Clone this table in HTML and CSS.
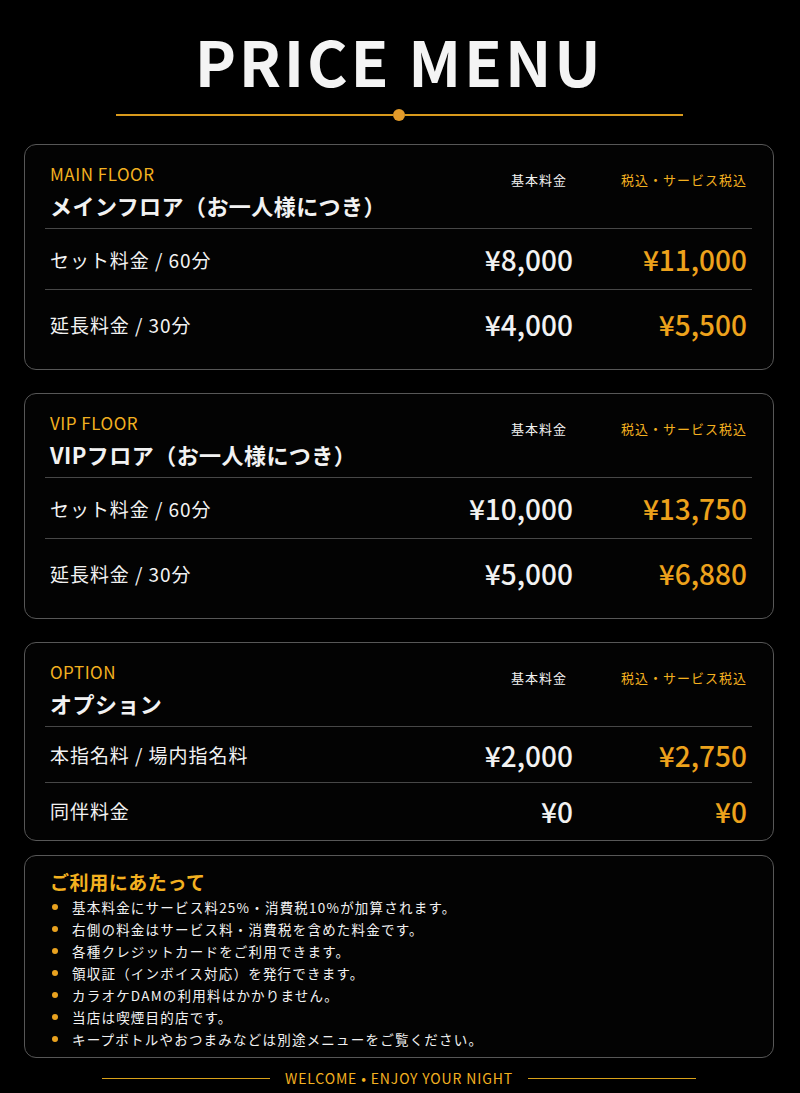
FILE: index.html
```html
<!DOCTYPE html>
<html lang="ja">
<head>
    <meta charset="UTF-8">
    <meta name="viewport" content="width=device-width, initial-scale=1.0">
    <title>PRICE MENU</title>
    <link rel="stylesheet" href="styles.css">
</head>
<body>
<div id="page">
    <header class="head">
        <h1 class="title">PRICE MENU</h1>
        <div class="ornament"><span class="line"></span><span class="dot"></span><span class="line"></span></div>
    </header>

    <section class="card">
        <div class="card-head">
            <div class="card-name">
                <div class="en">MAIN FLOOR</div>
                <h2 class="ja">メインフロア（お一人様につき）</h2>
            </div>
            <div class="col-label base">基本料金</div>
            <div class="col-label gold">税込・サービス税込</div>
        </div>
        <div class="row">
            <div class="item">セット料金 / 60分</div>
            <div class="price">¥8,000</div>
            <div class="price gold">¥11,000</div>
        </div>
        <div class="row">
            <div class="item">延長料金 / 30分</div>
            <div class="price">¥4,000</div>
            <div class="price gold">¥5,500</div>
        </div>
    </section>

    <section class="card">
        <div class="card-head">
            <div class="card-name">
                <div class="en">VIP FLOOR</div>
                <h2 class="ja">VIPフロア（お一人様につき）</h2>
            </div>
            <div class="col-label base">基本料金</div>
            <div class="col-label gold">税込・サービス税込</div>
        </div>
        <div class="row">
            <div class="item">セット料金 / 60分</div>
            <div class="price">¥10,000</div>
            <div class="price gold">¥13,750</div>
        </div>
        <div class="row">
            <div class="item">延長料金 / 30分</div>
            <div class="price">¥5,000</div>
            <div class="price gold">¥6,880</div>
        </div>
    </section>

    <section class="card card-option">
        <div class="card-head">
            <div class="card-name">
                <div class="en">OPTION</div>
                <h2 class="ja">オプション</h2>
            </div>
            <div class="col-label base">基本料金</div>
            <div class="col-label gold">税込・サービス税込</div>
        </div>
        <div class="row">
            <div class="item">本指名料 / 場内指名料</div>
            <div class="price">¥2,000</div>
            <div class="price gold">¥2,750</div>
        </div>
        <div class="row">
            <div class="item">同伴料金</div>
            <div class="price">¥0</div>
            <div class="price gold">¥0</div>
        </div>
    </section>

    <section class="notes">
        <h3 class="notes-title">ご利用にあたって</h3>
        <ul class="notes-list">
            <li>基本料金にサービス料25%・消費税10%が加算されます。</li>
            <li>右側の料金はサービス料・消費税を含めた料金です。</li>
            <li>各種クレジットカードをご利用できます。</li>
            <li>領収証（インボイス対応）を発行できます。</li>
            <li>カラオケDAMの利用料はかかりません。</li>
            <li>当店は喫煙目的店です。</li>
            <li>キープボトルやおつまみなどは別途メニューをご覧ください。</li>
        </ul>
    </section>

    <footer class="foot">
        <span class="line"></span>
        <span class="foot-text">WELCOME • ENJOY YOUR NIGHT</span>
        <span class="line"></span>
    </footer>
</div>
</body>
</html>
```

FILE: styles.css
```css
html {
    background: #000;
}

body {
    margin: 0;
    background: #000;
    color: #f2f2f2;
    font-family: "Noto Sans CJK JP", "Noto Sans", sans-serif;
}

#page {
    width: 750px;
    margin-left: 24px;
    padding-bottom: 5px;
}

h1, h2, h3 {
    margin: 0;
}

ul {
    margin: 0;
    padding: 0;
    list-style: none;
}

.gold {
    color: #f3b120;
}

/* タイトル */
.title {
    margin-top: 29px;
    font-size: 62px;
    line-height: 62px;
    font-weight: 700;
    letter-spacing: .045em;
    text-align: center;
    color: #f4f4f4;
}

.ornament {
    display: flex;
    align-items: center;
    width: 567px;
    height: 12px;
    margin: 18px auto 0;
}

.ornament .line {
    flex: 1;
    height: 1.5px;
    background: #d99a1c;
}

.ornament .dot {
    width: 12px;
    height: 12px;
    border-radius: 50%;
    background: #e39b2a;
}

/* カード */
.card {
    margin-top: 23px;
    padding: 0 21px 15px 20px;
    border: 1px solid #575757;
    border-radius: 12px;
    background: #030303;
}

.card-head,
.row {
    display: grid;
    grid-template-columns: 1fr 190px 174px;
    padding: 0 5px;
}

.card-head {
    padding-top: 17px;
    padding-bottom: 7px;
    border-bottom: 1px solid #474747;
}

.en {
    font-size: 17px;
    line-height: 24px;
    letter-spacing: .03em;
    color: #f3b120;
}

.ja {
    margin-top: 3px;
    font-size: 22px;
    line-height: 32px;
    font-weight: 700;
    letter-spacing: .02em;
}

.col-label {
    margin-top: 8px;
    font-size: 13px;
    line-height: 20px;
    letter-spacing: 1px;
    text-align: right;
}

.col-label.base {
    padding-right: 6px;
}

.row {
    align-items: center;
    height: 60px;
    border-bottom: 1px solid #474747;
}

.row:last-child {
    padding-top: 4px;
    border-bottom: none;
}

.item {
    font-size: 19px;
    letter-spacing: .05em;
}

.price {
    font-size: 28px;
    line-height: 1;
    font-weight: 500;
    text-align: right;
}

.price.gold {
    color: #eda21c;
}

.card-option {
    padding-bottom: 2px;
}

.card-option .row {
    height: 55px;
}

.card-option .row:last-child {
    padding-top: 0;
}

/* ご利用にあたって */
.notes {
    margin-top: 14px;
    padding: 12px 20px 7px 25px;
    border: 1px solid #575757;
    border-radius: 12px;
    background: #030303;
}

.notes-title {
    font-size: 19px;
    line-height: 28px;
    font-weight: 700;
    letter-spacing: .03em;
    color: #f3b120;
}

.notes-list li {
    display: flex;
    align-items: center;
    font-size: 13.5px;
    line-height: 22px;
    letter-spacing: .09em;
}

.notes-list li::before {
    content: "";
    flex: none;
    width: 6px;
    height: 6px;
    margin: 0 14px 0 2px;
    border-radius: 50%;
    background: #e9a21f;
}

/* フッター */
.foot {
    display: flex;
    justify-content: center;
    align-items: center;
    gap: 15px;
    margin-top: 10px;
    height: 20px;
}

.foot .line {
    width: 168px;
    height: 1px;
    background: #d9a21a;
}

.foot-text {
    font-size: 14px;
    line-height: 20px;
    letter-spacing: .06em;
    color: #f3b120;
}
```
